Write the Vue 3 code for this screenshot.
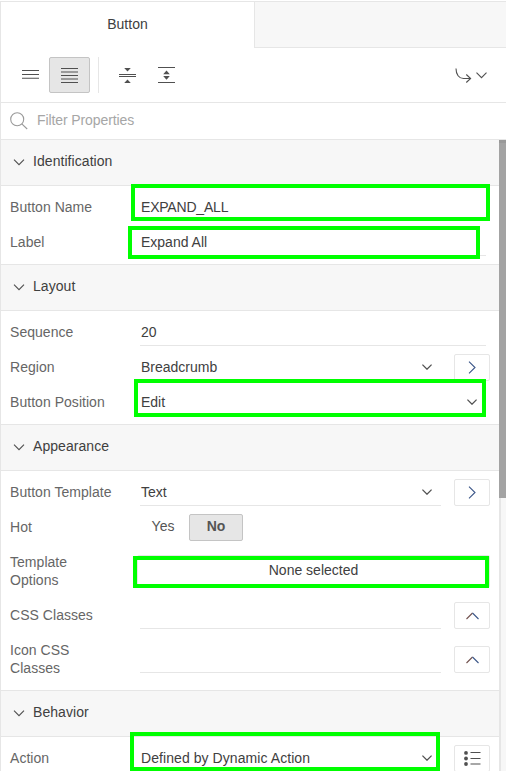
<script setup>
const sections = [
  {
    title: 'Identification',
    rows: [
      { label: 'Button Name', type: 'text', value: 'EXPAND_ALL', fit: 'tight' },
      { label: 'Label', type: 'text', value: 'Expand All' },
    ],
  },
  {
    title: 'Layout',
    rows: [
      { label: 'Sequence', type: 'text', value: '20' },
      { label: 'Region', type: 'select', value: 'Breadcrumb', action: 'go' },
      { label: 'Button Position', type: 'select', value: 'Edit' },
    ],
  },
  {
    title: 'Appearance',
    rows: [
      { label: 'Button Template', type: 'select', value: 'Text', action: 'go' },
      { label: 'Hot', type: 'toggle' },
      { label: 'Template Options', type: 'options', value: 'None selected', tall: true },
      { label: 'CSS Classes', type: 'text', value: '', action: 'up' },
      { label: 'Icon CSS Classes', type: 'text', value: '', action: 'up', tall: true },
    ],
  },
  {
    title: 'Behavior',
    rows: [{ label: 'Action', type: 'select', value: 'Defined by Dynamic Action', action: 'list', fit: 'loose' }],
  },
]
const marks = ['name', 'label', 'position', 'options', 'action']
</script>

<template>
  <div class="panel">
    <div class="tabs">
      <div class="tab">Button</div>
      <div class="tab-rest"></div>
    </div>

    <div class="toolbar">
      <div class="tool first">
        <svg width="17" height="9" viewBox="0 0 17 9"><path d="M0 .5h17M0 4.500h17M0 8.200h17" /></svg>
      </div>
      <div class="tool active">
        <svg width="17" height="15" viewBox="0 0 17 15"><path d="M0 .5h17M0 4h17M0 7.500h17M0 11h17M0 14.500h17" /></svg>
      </div>
      <div class="divider"></div>
      <div class="tool">
        <svg width="17" height="15" viewBox="0 0 17 15">
          <path d="M0 6.500h17M0 8.500h17" />
          <path class="solid" d="M5.200 0h6.600l-3.300 3.500zM5.200 15h6.600l-3.300-3.500z" />
        </svg>
      </div>
      <div class="tool">
        <svg width="17" height="16" viewBox="0 0 17 16">
          <path d="M0 .5h17M0 15.500h17" />
          <path class="solid" d="M5.200 7.200h6.600l-3.300-3.700zM5.200 9h6.600l-3.300 3.700z" />
        </svg>
      </div>
      <div class="goto">
        <svg width="17" height="15" viewBox="0 0 17 15">
          <path d="M1 .5C1 6.500 4 10.500 8.500 10.500H15.500M11.300 6.500l4.300 4-4.300 4" />
        </svg>
        <svg width="11" height="7" viewBox="0 0 11 7"><path d="M.5 .7l5 5 5-5" /></svg>
      </div>
    </div>

    <div class="filter">
      <svg width="18" height="18" viewBox="0 0 18 18"><circle cx="7.200" cy="7.200" r="6.500" /><path d="M11.800 11.800l5.400 5.200" /></svg>
      <span>Filter Properties</span>
    </div>

    <div class="body">
      <div class="content">
        <section v-for="s in sections" :key="s.title">
          <h2>
            <svg width="12" height="7" viewBox="0 0 12 7"><path d="M1 .7l5 5 5-5" /></svg>
            <span>{{ s.title }}</span>
          </h2>
          <div class="rows">
            <div v-for="r in s.rows" :key="r.label" class="row" :class="{ tall: r.tall }">
              <label>{{ r.label }}</label>
              <div v-if="r.type === 'toggle'" class="toggle">
                <span class="yes">Yes</span>
                <span class="no">No</span>
              </div>
              <div v-else-if="r.type === 'options'" class="options">{{ r.value }}</div>
              <template v-else>
                <div class="field">
                  <span :class="r.fit">{{ r.value }}</span>
                  <svg v-if="r.type === 'select'" class="caret" width="10" height="6" viewBox="0 0 10 6"><path d="M.4 .6L5 5.200 9.600 .6" /></svg>
                </div>
                <div v-if="r.action" class="side">
                  <svg v-if="r.action === 'go'" width="8" height="13" viewBox="0 0 8 13"><path class="blue" d="M1 .6l6 5.900-6 5.900" /></svg>
                  <svg v-else-if="r.action === 'up'" width="13" height="8" viewBox="0 0 13 8">
                    <path class="red" d="M.5 7l6-6" /><path class="blue" d="M6.500 1l6 6" />
                  </svg>
                  <svg v-else width="17" height="15" viewBox="0 0 17 15">
                    <path d="M6.500 1.500h10M6.500 7.500h10M6.500 13h10" />
                    <circle class="solid" cx="2" cy="1.900" r="1.900" />
                    <circle class="solid" cx="2" cy="7.500" r="1.900" />
                    <circle class="solid" cx="2" cy="13" r="1.900" />
                  </svg>
                </div>
              </template>
            </div>
          </div>
        </section>
      </div>
      <div class="track"><div class="thumb"></div></div>
    </div>

    <div v-for="m in marks" :key="m" class="mark" :class="m"></div>
  </div>
</template>

<style>
body {
  margin: 0;
  background: #fff;
}
</style>

<style scoped>
* {
  box-sizing: border-box;
}
.panel {
  position: relative;
  display: flex;
  flex-direction: column;
  width: 506px;
  height: 771px;
  padding-top: 1px;
  overflow: hidden;
  font: 14px/18px 'Liberation Sans', Arial, sans-serif;
  color: #404040;
}
svg {
  display: block;
  flex: none;
  fill: none;
  stroke: #505050;
  stroke-width: 1.1;
}
.solid {
  fill: #505050;
  stroke: none;
}
.tabs {
  display: flex;
  flex: none;
  height: 47px;
  border-top: 1px solid #e6e6e6;
  border-left: 1px solid #e6e6e6;
}
.tab {
  width: 253px;
  padding-top: 13px;
  text-align: center;
}
.tab-rest {
  flex: 1;
  border-left: 1px solid #e6e6e6;
  border-bottom: 1px solid #e6e6e6;
  background: #f7f7f7;
}
.toolbar {
  display: flex;
  align-items: center;
  flex: none;
  height: 55px;
  padding: 0 19px 0 9px;
  border-left: 1px solid #e6e6e6;
  border-bottom: 1px solid #e6e6e6;
}
.tool {
  display: flex;
  align-items: center;
  justify-content: center;
  width: 39px;
  height: 36px;
}
.tool.first {
  padding: 0 0 1px 2px;
}
.tool.active {
  width: 41px;
  border: 1px solid #c4c4c4;
  border-radius: 2px;
  background: #e6e6e6;
}
.divider {
  width: 1px;
  height: 36px;
  margin: 0 9px 0 8px;
  background: #e6e6e6;
}
.goto {
  display: flex;
  align-items: center;
  gap: 4px;
  margin-left: auto;
}
.filter {
  display: flex;
  align-items: center;
  flex: none;
  gap: 9px;
  height: 37px;
  padding: 0 0 1px 9px;
  border-left: 1px solid #e6e6e6;
  border-bottom: 1px solid #e6e6e6;
  color: #a6a6a6;
}
.filter span {
  padding-bottom: 2px;
  letter-spacing: -0.1px;
}
.filter svg {
  stroke: #999;
}
.body {
  display: flex;
  flex: 1;
  min-height: 0;
}
.content {
  width: 499px;
  border-left: 1px solid #e6e6e6;
  overflow: hidden;
}
h2 {
  display: flex;
  align-items: center;
  gap: 8px;
  height: 46px;
  margin: 0;
  padding: 0 0 1px 12px;
  border-bottom: 1px solid #e6e6e6;
  background: #f7f7f7;
  font-size: 14px;
  font-weight: 400;
  letter-spacing: 0.06px;
}
h2 span {
  padding-bottom: 2px;
}
.rows {
  padding: 4px 9px 4px;
  border-bottom: 1px solid #e6e6e6;
}
.row {
  display: flex;
  align-items: center;
  height: 35px;
}
.row.tall {
  height: 53px;
}
label {
  width: 104px;
  margin-right: 26px;
  padding-bottom: 1px;
  color: #666;
  letter-spacing: 0.04px;
}
.field {
  display: flex;
  align-items: center;
  justify-content: space-between;
  flex: 1;
  height: 27px;
  margin-right: 4px;
  padding: 0 9px 0 1px;
  border-bottom: 1px solid #e6e6e6;
}
.field:has(+ .side) {
  margin-right: 13px;
}
.tight {
  letter-spacing: -0.2px;
}
.loose {
  letter-spacing: 0.07px;
}
.caret {
  stroke-width: 1.3;
}
.side {
  display: flex;
  align-items: center;
  justify-content: center;
  width: 36px;
  height: 27px;
  border: 1px solid #e6e6e6;
  border-radius: 2px;
}
.blue {
  stroke: #3b5688;
}
.red {
  stroke: #71504d;
}
.toggle {
  display: flex;
  color: #555;
  line-height: 25px;
  text-align: center;
}
.yes {
  width: 46px;
  margin-right: 3px;
}
.no {
  width: 54px;
  height: 27px;
  border: 1px solid #c4c4c4;
  border-radius: 2px;
  background: #e6e6e6;
  font-weight: 700;
  line-height: 23px;
}
.options {
  flex: 1;
  height: 33px;
  margin-left: -3px;
  border: 1px solid #e6e6e6;
  border-radius: 2px;
  line-height: 29px;
  text-align: center;
}
.track {
  flex: 1;
  border-left: 2px solid #e6e6e6;
  background: #f7f7f7;
}
.thumb {
  height: 358px;
  margin-left: -2px;
  border-top: 3px solid #999;
  background: #a3a3a3;
}
/* Highlight frames drawn over the form */
.mark {
  position: absolute;
  border: 4px solid #0f0;
}
.name {
  left: 131px;
  top: 184px;
  width: 359px;
  height: 37px;
}
.label {
  left: 128px;
  top: 226px;
  width: 352px;
  height: 33px;
}
.position {
  left: 134px;
  top: 379px;
  width: 352px;
  height: 38px;
}
.mark.options {
  left: 133px;
  top: 556px;
  width: 356px;
  height: 32px;
  margin: 0;
  border-radius: 0;
}
.action {
  left: 130px;
  top: 732px;
  width: 310px;
  height: 39px;
}
</style>
